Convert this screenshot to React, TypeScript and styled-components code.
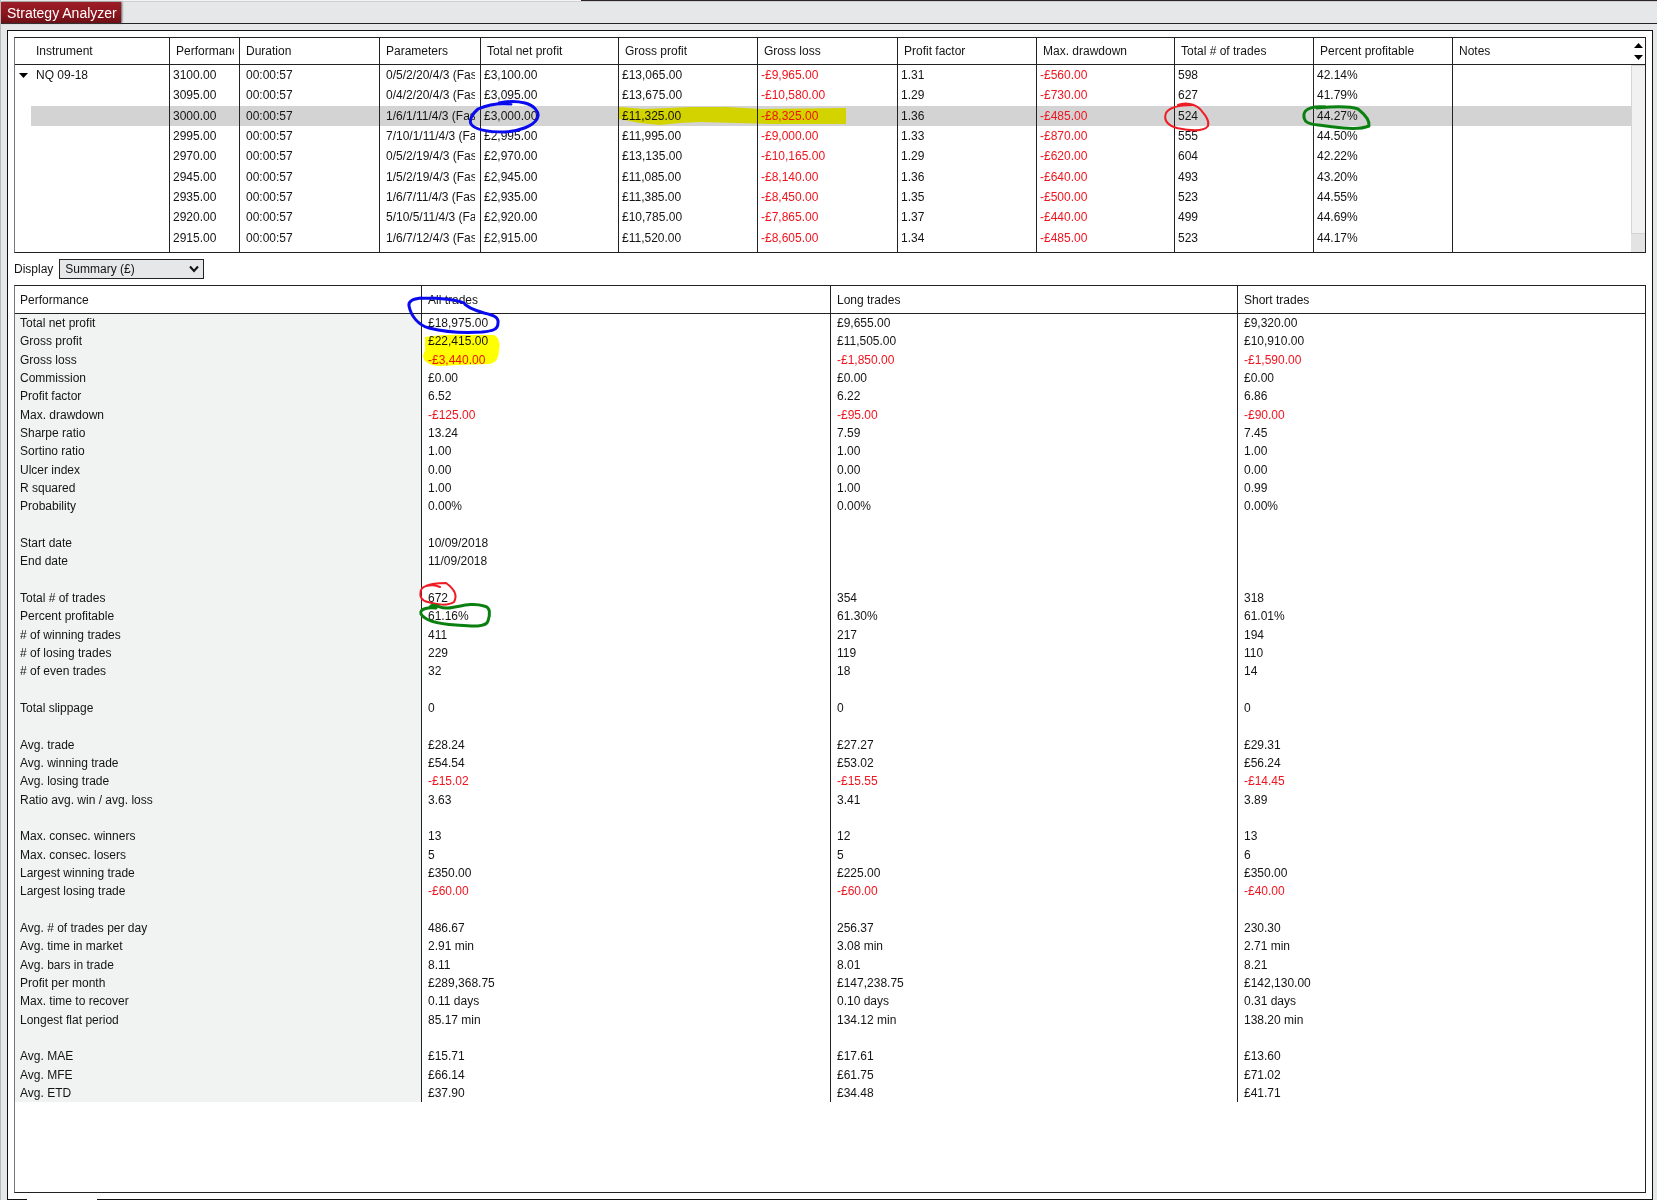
import React from "react";
import styled, { createGlobalStyle, css } from "styled-components";

const ink = "#141414";
const rule = "#222";
const loss = "#f0141e";
const selected = "#d3d3d3";

const GlobalStyle = createGlobalStyle`
  *, *::before, *::after { box-sizing: border-box; }
  body {
    margin: 0;
    background: #e6e7e8;
    color: ${ink};
    font: 12px/18px "Liberation Sans", Arial, sans-serif;
  }
`;

const Page = styled.div`
  position: relative;
  display: flex;
  flex-direction: column;
  min-height: 100vh;
  border-left: 1px solid #b9b9b9;
  overflow: hidden;
`;

const TopEdge = styled.div`
  height: 2px;
  border-bottom: 1px solid #cfcfcf;
  background: linear-gradient(90deg, #f4f4f4 35%, #2a2326 35%);
`;

const TabBar = styled.header`
  display: flex;
  height: 22px;
  border-bottom: 1px solid ${rule};
`;

const Tab = styled.button`
  padding: 0 4px 0 6px;
  border: 0;
  background: linear-gradient(#9c1d27, #8c151e 55%, #6c0f16);
  box-shadow: 1px 0 2px #555;
  color: #fff;
  font: 14px/20px "Liberation Sans", Arial, sans-serif;
`;

const Workspace = styled.main`
  display: flex;
  flex: 1;
  flex-direction: column;
  gap: 6px;
  margin: 6px 4px 0 6px;
  padding: 6px 6px 0;
  border: solid #111;
  border-width: 1px 1px 0;
  background: #fff;
`;

const Panel = styled.section<{ $grow?: boolean }>`
  display: flex;
  align-items: stretch;
  border: 1px solid ${rule};
  border-left-color: #777;
  ${(p) => p.$grow && css`flex: 1; align-items: flex-start;`}
`;

const Table = styled.table`
  flex: 1;
  width: 100%;
  table-layout: fixed;
  border-collapse: separate;
  border-spacing: 0;
`;

const HeadCell = styled.th`
  height: 27px;
  padding: 0 5px 0 6px;
  overflow: hidden;
  border-right: 1px solid ${rule};
  border-bottom: 1px solid ${rule};
  font-weight: normal;
  text-align: left;
  white-space: nowrap;
  &:last-child { border-right: 0; }
`;

const SummaryHead = styled(HeadCell)`
  height: 28px;
  &:first-child { padding-left: 5px; }
`;

const Clip = styled.span`
  display: block;
  overflow: hidden;
  white-space: nowrap;
`;

const ResultCell = styled.td<{ $wide?: boolean; $loss?: boolean }>`
  height: 20px;
  padding: 0 5px 0 ${(p) => (p.$wide ? 6 : 3)}px;
  border-right: 1px solid ${rule};
  color: ${(p) => (p.$loss ? loss : ink)};
  line-height: 20px;
  vertical-align: top;
  &:last-child { border-right: 0; }
`;

const InstrumentCell = styled(ResultCell)`
  padding: 0;
`;

const ResultRow = styled.tr<{ $selected?: boolean }>`
  &:nth-child(3n + 2) > td { height: 21px; }
  &:last-child > td { height: 24px; }
  ${(p) =>
    p.$selected &&
    css`
      > td { background: ${selected}; }
      > td:first-child { background: linear-gradient(90deg, #fff 16px, ${selected} 16px); }
    `}
`;

const InstrumentName = styled.div`
  display: flex;
  align-items: center;
  height: 20px;
`;

const Expander = styled.button`
  display: flex;
  justify-content: center;
  width: 16px;
  margin-right: 5px;
  padding: 0;
  border: 0;
  background: none;
`;

const InstrumentHead = styled(HeadCell)`
  padding-left: 21px;
`;

const ScrollColumn = styled.div`
  display: flex;
  flex-direction: column;
  width: 14px;
`;

const ScrollButtons = styled.div`
  display: flex;
  flex-direction: column;
  justify-content: space-around;
  height: 27px;
  padding: 1px 0;
  border-bottom: 1px solid ${rule};
`;

const ScrollButton = styled.button`
  display: flex;
  align-items: center;
  justify-content: center;
  padding: 0;
  border: 0;
  background: none;
`;

const ScrollTrack = styled.div`
  flex: 1;
  padding-bottom: 18px;
  background: #e3e3e3;
`;

const ScrollThumb = styled.div`
  height: 100%;
  border: 1px solid #d4d4d4;
  border-right: 0;
  background: #f1f1f1;
`;

const DisplayBar = styled.div`
  display: flex;
  align-items: center;
  gap: 6px;
`;

const SelectFrame = styled.div`
  display: grid;
  align-items: center;
  > * { grid-area: 1 / 1; }
  > svg { justify-self: end; margin-right: 5px; pointer-events: none; }
`;

const Select = styled.select`
  width: 145px;
  height: 20px;
  padding: 0 5px;
  appearance: none;
  border: 1px solid ${rule};
  border-radius: 0;
  background: #e6e7e8;
  color: ${ink};
  font: inherit;
`;

const SummaryRow = styled.tr`
  > * { height: 18px; }
  &:nth-child(3n) > * { height: 19px; }
`;

const SummaryLabel = styled.th`
  padding: 0 6px 0 5px;
  border-right: 1px solid ${rule};
  background: #f1f2f2;
  font-weight: normal;
  line-height: 18px;
  text-align: left;
`;

const SummaryCell = styled.td<{ $loss?: boolean }>`
  padding: 0 6px;
  border-right: 1px solid ${rule};
  color: ${(p) => (p.$loss ? loss : ink)};
  line-height: 18px;
  &:last-child { border-right: 0; }
`;

const BottomEdge = styled.footer`
  display: grid;
  grid-template-columns: 20px 70px 1fr;
  height: 1px;
  margin: 0 -7px;
  background: #111;
  &::before { grid-column: 2; background: #fff; content: ""; }
`;

const Markup = styled.svg`
  position: absolute;
  top: 0;
  left: -1px;
  width: 1657px;
  height: 1200px;
  fill: none;
  stroke-linecap: round;
  stroke-linejoin: round;
  pointer-events: none;
`;

const Highlighter = styled(Markup)`
  mix-blend-mode: multiply;
`;

const columnWidths = [155, 70, 140, 101, 138, 139, 140, 139, 138, 139, 139];
const columns = [
  "Performance", "Duration", "Parameters", "Total net profit", "Gross profit", "Gross loss",
  "Profit factor", "Max. drawdown", "Total # of trades", "Percent profitable", "Notes",
];

const results = [
  ["3100.00", "00:00:57", "0/5/2/20/4/3 (Fast)", "£3,100.00", "£13,065.00", "-£9,965.00", "1.31", "-£560.00", "598", "42.14%", ""],
  ["3095.00", "00:00:57", "0/4/2/20/4/3 (Fast)", "£3,095.00", "£13,675.00", "-£10,580.00", "1.29", "-£730.00", "627", "41.79%", ""],
  ["3000.00", "00:00:57", "1/6/1/11/4/3 (Fast)", "£3,000.00", "£11,325.00", "-£8,325.00", "1.36", "-£485.00", "524", "44.27%", ""],
  ["2995.00", "00:00:57", "7/10/1/11/4/3 (Fast)", "£2,995.00", "£11,995.00", "-£9,000.00", "1.33", "-£870.00", "555", "44.50%", ""],
  ["2970.00", "00:00:57", "0/5/2/19/4/3 (Fast)", "£2,970.00", "£13,135.00", "-£10,165.00", "1.29", "-£620.00", "604", "42.22%", ""],
  ["2945.00", "00:00:57", "1/5/2/19/4/3 (Fast)", "£2,945.00", "£11,085.00", "-£8,140.00", "1.36", "-£640.00", "493", "43.20%", ""],
  ["2935.00", "00:00:57", "1/6/7/11/4/3 (Fast)", "£2,935.00", "£11,385.00", "-£8,450.00", "1.35", "-£500.00", "523", "44.55%", ""],
  ["2920.00", "00:00:57", "5/10/5/11/4/3 (Fast)", "£2,920.00", "£10,785.00", "-£7,865.00", "1.37", "-£440.00", "499", "44.69%", ""],
  ["2915.00", "00:00:57", "1/6/7/12/4/3 (Fast)", "£2,915.00", "£11,520.00", "-£8,605.00", "1.34", "-£485.00", "523", "44.17%", ""],
];

const blank = ["", "", "", ""];
const summary = [
  ["Total net profit", "£18,975.00", "£9,655.00", "£9,320.00"],
  ["Gross profit", "£22,415.00", "£11,505.00", "£10,910.00"],
  ["Gross loss", "-£3,440.00", "-£1,850.00", "-£1,590.00"],
  ["Commission", "£0.00", "£0.00", "£0.00"],
  ["Profit factor", "6.52", "6.22", "6.86"],
  ["Max. drawdown", "-£125.00", "-£95.00", "-£90.00"],
  ["Sharpe ratio", "13.24", "7.59", "7.45"],
  ["Sortino ratio", "1.00", "1.00", "1.00"],
  ["Ulcer index", "0.00", "0.00", "0.00"],
  ["R squared", "1.00", "1.00", "0.99"],
  ["Probability", "0.00%", "0.00%", "0.00%"],
  blank,
  ["Start date", "10/09/2018", "", ""],
  ["End date", "11/09/2018", "", ""],
  blank,
  ["Total # of trades", "672", "354", "318"],
  ["Percent profitable", "61.16%", "61.30%", "61.01%"],
  ["# of winning trades", "411", "217", "194"],
  ["# of losing trades", "229", "119", "110"],
  ["# of even trades", "32", "18", "14"],
  blank,
  ["Total slippage", "0", "0", "0"],
  blank,
  ["Avg. trade", "£28.24", "£27.27", "£29.31"],
  ["Avg. winning trade", "£54.54", "£53.02", "£56.24"],
  ["Avg. losing trade", "-£15.02", "-£15.55", "-£14.45"],
  ["Ratio avg. win / avg. loss", "3.63", "3.41", "3.89"],
  blank,
  ["Max. consec. winners", "13", "12", "13"],
  ["Max. consec. losers", "5", "5", "6"],
  ["Largest winning trade", "£350.00", "£225.00", "£350.00"],
  ["Largest losing trade", "-£60.00", "-£60.00", "-£40.00"],
  blank,
  ["Avg. # of trades per day", "486.67", "256.37", "230.30"],
  ["Avg. time in market", "2.91 min", "3.08 min", "2.71 min"],
  ["Avg. bars in trade", "8.11", "8.01", "8.21"],
  ["Profit per month", "£289,368.75", "£147,238.75", "£142,130.00"],
  ["Max. time to recover", "0.11 days", "0.10 days", "0.31 days"],
  ["Longest flat period", "85.17 min", "134.12 min", "138.20 min"],
  blank,
  ["Avg. MAE", "£15.71", "£17.61", "£13.60"],
  ["Avg. MFE", "£66.14", "£61.75", "£71.02"],
  ["Avg. ETD", "£37.90", "£34.48", "£41.71"],
];

const isLoss = (value: string) => value.startsWith("-");

function Triangle({ up }: { up?: boolean }) {
  return (
    <svg width="9" height="5" viewBox="0 0 9 5" aria-hidden="true">
      <path d={up ? "M0 5 4.5 0 9 5z" : "M0 0h9L4.5 5z"} fill="#000" />
    </svg>
  );
}

function ResultsGrid() {
  return (
    <Panel>
      <Table>
        <colgroup>
          {columnWidths.map((width, i) => <col key={i} width={width} />)}
          <col />
        </colgroup>
        <thead>
          <tr>
            <InstrumentHead scope="col">Instrument</InstrumentHead>
            {columns.map((name) => (
              <HeadCell key={name} scope="col"><Clip>{name}</Clip></HeadCell>
            ))}
          </tr>
        </thead>
        <tbody>
          {results.map((row, r) => (
            <ResultRow key={row[0]} $selected={r === 2}>
              <InstrumentCell>
                {r === 0 && (
                  <InstrumentName>
                    <Expander aria-label="Collapse"><Triangle /></Expander>
                    NQ 09-18
                  </InstrumentName>
                )}
              </InstrumentCell>
              {row.map((value, c) => (
                <ResultCell key={c} $wide={c === 1 || c === 2} $loss={isLoss(value)}>
                  <Clip>{value}</Clip>
                </ResultCell>
              ))}
            </ResultRow>
          ))}
        </tbody>
      </Table>
      <ScrollColumn>
        <ScrollButtons>
          <ScrollButton aria-label="Scroll up"><Triangle up /></ScrollButton>
          <ScrollButton aria-label="Scroll down"><Triangle /></ScrollButton>
        </ScrollButtons>
        <ScrollTrack><ScrollThumb /></ScrollTrack>
      </ScrollColumn>
    </Panel>
  );
}

function SummaryGrid() {
  return (
    <Panel $grow>
      <Table>
        <colgroup>
          <col width={407} />
          <col width={409} />
          <col span={2} />
        </colgroup>
        <thead>
          <tr>
            {["Performance", "All trades", "Long trades", "Short trades"].map((name) => (
              <SummaryHead key={name} scope="col">{name}</SummaryHead>
            ))}
          </tr>
        </thead>
        <tbody>
          {summary.map(([label, ...values], r) => (
            <SummaryRow key={r}>
              <SummaryLabel scope="row">{label}</SummaryLabel>
              {values.map((value, c) => (
                <SummaryCell key={c} $loss={isLoss(value)}>{value}</SummaryCell>
              ))}
            </SummaryRow>
          ))}
        </tbody>
      </Table>
    </Panel>
  );
}

export default function App() {
  return (
    <Page>
      <GlobalStyle />
      <TopEdge />
      <TabBar><Tab>Strategy Analyzer</Tab></TabBar>
      <Workspace>
        <ResultsGrid />
        <DisplayBar>
          <label htmlFor="display">Display</label>
          <SelectFrame>
            <Select id="display"><option>Summary (£)</option></Select>
            <svg width="10" height="8" viewBox="0 0 10 8" aria-hidden="true">
              <path d="M1 1.5 5 6l4-4.5" fill="none" stroke="#111" strokeWidth="2" />
            </svg>
          </SelectFrame>
        </DisplayBar>
        <SummaryGrid />
        <BottomEdge />
      </Workspace>
      <Highlighter viewBox="0 0 1657 1200" aria-hidden="true">
        <g fill="#ff0">
          <path d="M619 107 645 109 690 107 728 107 760 109 846 108V124L800 124 770 124 738 123 700 122 680 123 660 125 640 123 619 119z" />
          <path d="M425 337Q445 334 470 335L494 335Q501 338 499 350 499 362 490 364L458 365 440 366Q424 365 423 356L425 350z" />
        </g>
      </Highlighter>
      <Markup viewBox="0 0 1657 1200" aria-hidden="true">
        <g stroke="#0a0aef" strokeWidth="3">
          <path d="M511 104C500 103 487 105 478 109 472 114 469 120 471 124 475 130 490 132 505 132 520 131 533 126 537 119 541 112 533 105 525 103 517 101 508 101 499 103" />
          <path d="M421 298C413 299 408 301 409 306 411 316 418 325 429 328 445 332 467 333 482 332 492 331 498 330 498 323 499 317 493 315 484 313 474 310 466 307 464 303 455 299 438 298 421 298" />
        </g>
        <g stroke="#ee1c25" strokeWidth="2">
          <path d="M1193 105C1183 105 1170 106 1166 113 1163 121 1169 126 1177 128 1187 130 1203 133 1208 126 1210 120 1204 114 1200 109 1195 104 1185 102 1178 105" />
          <path d="M440 587C434 584 423 585 421 590 419 597 422 601 428 602 437 605 448 606 454 602 458 595 453 588 446 583 438 583 430 584 426 586" />
        </g>
        <g stroke="#0b8011" strokeWidth="3">
          <path d="M1325 107C1315 106 1305 108 1304 114 1303 122 1308 124 1318 125 1334 127 1357 131 1369 126 1370 120 1363 113 1358 109 1347 105 1328 107 1317 108" />
          <path d="M436 608C428 607 419 609 421 614 425 621 439 624 456 625 469 626 486 628 488 621 490 615 491 607 484 606 471 602 459 607 448 608 439 609 434 602 430 607" />
        </g>
      </Markup>
    </Page>
  );
}
